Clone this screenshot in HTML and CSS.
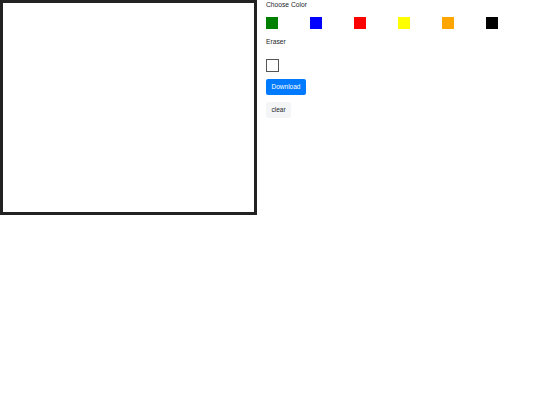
FILE: index.html
```html
<!DOCTYPE html>
<html>
<head>
<meta charset="utf-8">
<link rel="stylesheet" href="styles.css">
</head>
<body>
<div class="app">
  <canvas class="board" width="251" height="209"></canvas>
  <div class="panel">
    <div class="label">Choose Color</div>
    <div class="colors">
      <span class="swatch green"></span>
      <span class="swatch blue"></span>
      <span class="swatch red"></span>
      <span class="swatch yellow"></span>
      <span class="swatch orange"></span>
      <span class="swatch black"></span>
    </div>
    <div class="label eraser-label">Eraser</div>
    <span class="eraser"></span>
    <button class="btn download">Download</button>
    <button class="btn clear">clear</button>
  </div>
</div>
</body>
</html>
```
FILE: styles.css
```css
html, body {
  margin: 0;
  padding: 0;
  background: #fff;
  font-family: "Liberation Sans", Arial, sans-serif;
  color: #212529;
}
.app {
  display: flex;
  align-items: flex-start;
}
.board {
  display: block;
  width: 251px;
  height: 209px;
  border: 3px solid #222;
  background: #fff;
}
.panel {
  margin-left: 9px;
  display: flex;
  flex-direction: column;
  align-items: flex-start;
}
.label {
  font-size: 6.7px;
  line-height: 9px;
  height: 9px;
}
.colors {
  display: flex;
  gap: 32px;
  margin-top: 8px;
}
.swatch {
  width: 12px;
  height: 12px;
  display: block;
}
.green { background: #008000; }
.blue { background: #0000ff; }
.red { background: #ff0000; }
.yellow { background: #ffff00; }
.orange { background: #ffa500; }
.black { background: #000; }
.eraser-label {
  margin-top: 8px;
}
.eraser {
  display: block;
  width: 11px;
  height: 11px;
  border: 1px solid #555;
  margin-top: 13px;
}
.btn {
  font-family: "Liberation Sans", Arial, sans-serif;
  font-size: 6.5px;
  border: none;
  border-radius: 2px;
  height: 16px;
  line-height: 16px;
  padding: 0;
  cursor: pointer;
}
.download {
  margin-top: 7px;
  background: #007bff;
  color: #fff;
  width: 40px;
}
.clear {
  margin-top: 7px;
  background: #f4f5f6;
  color: #212529;
  width: 25px;
}
```
